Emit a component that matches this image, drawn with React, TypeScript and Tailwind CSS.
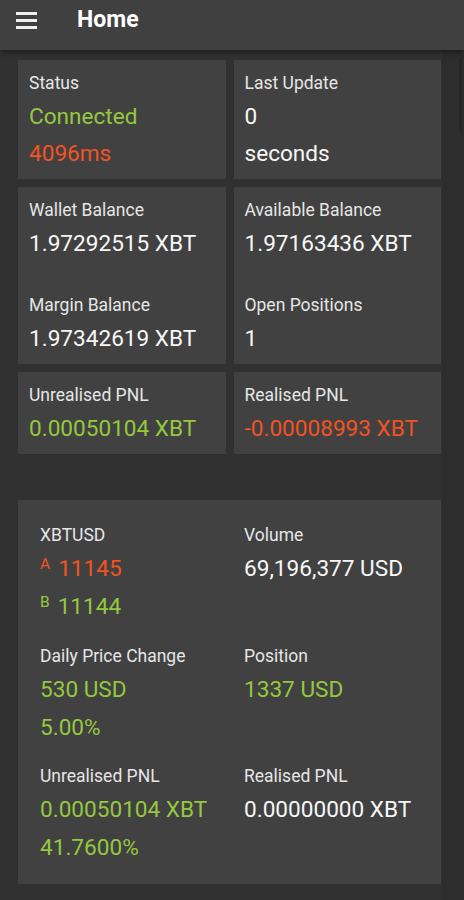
import React from "react";

const GREEN = "text-[#94c83e]";
const ORANGE = "text-[#f25322]";

function Label({ children }: { children: React.ReactNode }) {
  return <div className="text-[17.5px] leading-[22px] text-[#e6e6e6]">{children}</div>;
}

function Value({ children, color = "text-[#f7f7f7]", lh = "leading-[37px]" }: { children: React.ReactNode; color?: string; lh?: string }) {
  return <div className={`text-[22.6px] ${lh} ${color}`}>{children}</div>;
}

function Card({ children }: { children: React.ReactNode }) {
  return <div className="bg-[#414141] pl-[11px] pt-3 pb-[7px]">{children}</div>;
}

function Quote({ letter, value, color }: { letter: string; value: string; color: string }) {
  return (
    <div className={`flex items-start ${color} leading-[38px]`}>
      <span className="text-[15.5px] leading-[29px] mr-[8px]">{letter}</span>
      <span className="text-[22.6px] leading-[38px]">{value}</span>
    </div>
  );
}

export default function App() {
  return (
    <div className="w-full min-h-[900px] bg-[#313131] flex flex-col" style={{ fontFamily: "Roboto, 'Noto Sans', sans-serif" }}>
      <header className="h-[50px] bg-[#404040] flex items-center pb-[9px] shadow-[0_3px_5px_rgba(0,0,0,0.35)] z-10">
        <div className="ml-4 w-[21px] flex flex-col gap-[4.5px]">
          <div className="h-[2.5px] bg-[#f0f0f0]" />
          <div className="h-[2.5px] bg-[#f0f0f0]" />
          <div className="h-[2.5px] bg-[#f0f0f0]" />
        </div>
        <div className="ml-[40px] text-[23px] font-bold text-white">Home</div>
      </header>
      <div className="flex flex-1">
        <main className="w-[442px] pl-[18px] pr-px pt-[10px]">
          <div className="grid grid-cols-2 gap-2">
            <Card>
              <Label>Status</Label>
              <div className="mt-1">
                <Value color={GREEN}>Connected</Value>
                <Value color={ORANGE}>4096ms</Value>
              </div>
            </Card>
            <Card>
              <Label>Last Update</Label>
              <div className="mt-1">
                <Value>0</Value>
                <Value>seconds</Value>
              </div>
            </Card>
            <Card>
              <Label>Wallet Balance</Label>
              <div className="mt-1">
                <Value>1.97292515 XBT</Value>
              </div>
              <div className="mt-8">
                <Label>Margin Balance</Label>
              </div>
              <div className="mt-1">
                <Value>1.97342619 XBT</Value>
              </div>
            </Card>
            <Card>
              <Label>Available Balance</Label>
              <div className="mt-1">
                <Value>1.97163436 XBT</Value>
              </div>
              <div className="mt-8">
                <Label>Open Positions</Label>
              </div>
              <div className="mt-1">
                <Value>1</Value>
              </div>
            </Card>
            <Card>
              <Label>Unrealised PNL</Label>
              <div className="mt-1">
                <Value color={GREEN}>0.00050104 XBT</Value>
              </div>
            </Card>
            <Card>
              <Label>Realised PNL</Label>
              <div className="mt-1">
                <Value color={ORANGE}>-0.00008993 XBT</Value>
              </div>
            </Card>
          </div>

          <div className="mt-[46px] bg-[#414141] pl-[22px] pt-6 pb-[17px] grid grid-cols-[204px_1fr]">
            <div>
              <Label>XBTUSD</Label>
              <div className="mt-1">
                <Quote letter="A" value="11145" color={ORANGE} />
                <Quote letter="B" value="11144" color={GREEN} />
              </div>
            </div>
            <div>
              <Label>Volume</Label>
              <div className="mt-1">
                <Value lh="leading-[38px]">69,196,377 USD</Value>
              </div>
            </div>

            <div className="mt-[19px]">
              <Label>Daily Price Change</Label>
              <div className="mt-1">
                <Value lh="leading-[38px]" color={GREEN}>530 USD</Value>
                <Value lh="leading-[38px]" color={GREEN}>5.00%</Value>
              </div>
            </div>
            <div className="mt-[19px]">
              <Label>Position</Label>
              <div className="mt-1">
                <Value lh="leading-[38px]" color={GREEN}>1337 USD</Value>
              </div>
            </div>

            <div className="mt-[18px]">
              <Label>Unrealised PNL</Label>
              <div className="mt-1">
                <Value lh="leading-[38px]" color={GREEN}>0.00050104 XBT</Value>
                <Value lh="leading-[38px]" color={GREEN}>41.7600%</Value>
              </div>
            </div>
            <div className="mt-[18px]">
              <Label>Realised PNL</Label>
              <div className="mt-1">
                <Value lh="leading-[38px]">0.00000000 XBT</Value>
              </div>
            </div>
          </div>
        </main>
        <aside className="flex-1 bg-[#2d2d2d] flex justify-end pt-[8px] pr-[2px]">
          <div className="w-[3px] h-[74px] bg-[#262626]" />
        </aside>
      </div>
    </div>
  );
}
